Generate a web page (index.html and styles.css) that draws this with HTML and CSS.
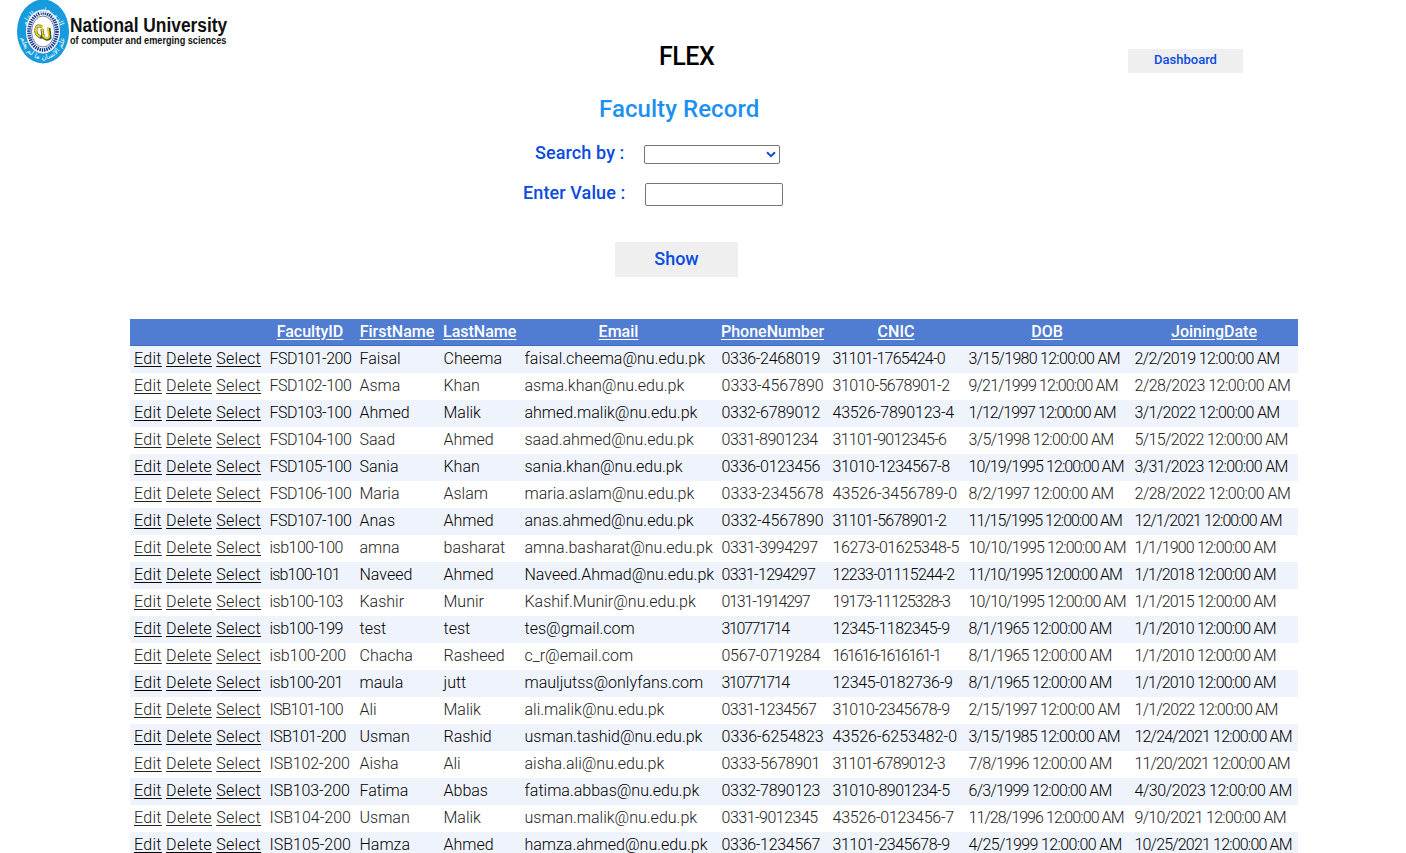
FILE: index.html
```html
<!DOCTYPE html>
<html lang="en">
<head>
<meta charset="utf-8">
<title>FLEX - Faculty Record</title>
<link rel="stylesheet" href="styles.css">
</head>
<body>
<header class="top">
  <div class="brand">
    <svg class="seal" viewBox="0 0 52 64" width="52" height="64">
      <defs>
        <path id="ringTop" d="M7.500 36 A18.500 23.500 0 1 1 44.500 36"/>
        <path id="ringBottom" d="M3.500 32 A22.500 27.500 0 0 0 48.500 32"/>
      </defs>
      <ellipse cx="26" cy="31.500" rx="26" ry="32" fill="#179bdc"/>
      <ellipse cx="26" cy="31.500" rx="17" ry="22" fill="#fff"/>
      <ellipse cx="26" cy="31.500" rx="14" ry="18.500" fill="none" stroke="#1d3f8f" stroke-width="3.600" stroke-dasharray="1.500 .8"/>
      <ellipse cx="26" cy="31.500" rx="11.500" ry="15.500" fill="#fff" stroke="#2a3f8c" stroke-width=".7"/>
      <g class="script">
        <text text-anchor="middle"><textPath href="#ringTop" startOffset="50%">الذى علم بالقلم</textPath></text>
        <text text-anchor="middle"><textPath href="#ringBottom" startOffset="50%">علم الانسان ما لم يعلم</textPath></text>
      </g>
      <g fill="none" stroke-linejoin="round">
        <path d="M25 27q-5-3-6 2t4 8q3 1 3-3" stroke="#386b32" stroke-width="3"/>
        <path d="M25 27q-5-3-6 2t4 8" stroke="#f4ca1b" stroke-width="2"/>
        <path d="M25 29l1 8q4 4 7 1l-1-10" stroke="#305f35" stroke-width="3"/>
        <path d="M25 28l1 8q4 4 6 1l-1-10" stroke="#f4ca1b" stroke-width="1.800"/>
      </g>
    </svg>
    <div class="brand-text">
      <span class="brand-name">National University</span>
      <span class="brand-sub">of computer and emerging sciences</span>
    </div>
  </div>
  <h1 class="app">FLEX</h1>
  <button class="btn dash">Dashboard</button>
</header>
<main>
  <h2 class="title"><span>Faculty Record</span></h2>
  <form class="search">
    <div class="line first"><label class="l1">Search by :</label><div class="select"><svg width="10" height="7" viewBox="0 0 10 7"><path d="M1 1.200l4 4 4-4" fill="none" stroke="#0e4fd8" stroke-width="2"/></svg></div></div>
    <div class="line second"><label class="l2">Enter Value :</label><input class="value" type="text"></div>
    <button class="btn show" type="button"><span>Show</span></button>
  </form>
  <table class="grid">
    <colgroup><col class="c1"><col class="c2"><col class="c3"><col class="c4"><col class="c5"><col class="c6"><col class="c7"><col class="c8"><col class="c9"></colgroup>
    <thead><tr><th></th><th><a>FacultyID</a></th><th><a>FirstName</a></th><th><a>LastName</a></th><th><a>Email</a></th><th><a>PhoneNumber</a></th><th><a>CNIC</a></th><th><a>DOB</a></th><th><a>JoiningDate</a></th></tr></thead>
    <tbody>
<tr><td><a>Edit</a><a>Delete</a><a>Select</a></td><td class="k5">FSD101-200</td><td>Faisal</td><td>Cheema</td><td>faisal.cheema@nu.edu.pk</td><td class="k3">0336-2468019</td><td class="k8">31101-1765424-0</td><td class="k7">3/15/1980 12:00:00 AM</td><td class="k6">2/2/2019 12:00:00 AM</td></tr>
<tr><td><a>Edit</a><a>Delete</a><a>Select</a></td><td class="k5">FSD102-100</td><td>Asma</td><td>Khan</td><td>asma.khan@nu.edu.pk</td><td>0333-4567890</td><td class="k5">31010-5678901-2</td><td class="k8">9/21/1999 12:00:00 AM</td><td class="k5">2/28/2023 12:00:00 AM</td></tr>
<tr><td><a>Edit</a><a>Delete</a><a>Select</a></td><td class="k5">FSD103-100</td><td>Ahmed</td><td>Malik</td><td>ahmed.malik@nu.edu.pk</td><td class="k3">0332-6789012</td><td class="k2">43526-7890123-4</td><td class="k9">1/12/1997 12:00:00 AM</td><td class="k6">3/1/2022 12:00:00 AM</td></tr>
<tr><td><a>Edit</a><a>Delete</a><a>Select</a></td><td class="k5">FSD104-100</td><td>Saad</td><td>Ahmed</td><td>saad.ahmed@nu.edu.pk</td><td class="k5">0331-8901234</td><td class="k7">31101-9012345-6</td><td class="k6">3/5/1998 12:00:00 AM</td><td class="k6">5/15/2022 12:00:00 AM</td></tr>
<tr><td><a>Edit</a><a>Delete</a><a>Select</a></td><td class="k5">FSD105-100</td><td>Sania</td><td>Khan</td><td>sania.khan@nu.edu.pk</td><td class="k3">0336-0123456</td><td class="k5">31010-1234567-8</td><td class="k9">10/19/1995 12:00:00 AM</td><td class="k6">3/31/2023 12:00:00 AM</td></tr>
<tr><td><a>Edit</a><a>Delete</a><a>Select</a></td><td class="k5">FSD106-100</td><td>Maria</td><td>Aslam</td><td>maria.aslam@nu.edu.pk</td><td>0333-2345678</td><td>43526-3456789-0</td><td class="k6">8/2/1997 12:00:00 AM</td><td class="k5">2/28/2022 12:00:00 AM</td></tr>
<tr><td><a>Edit</a><a>Delete</a><a>Select</a></td><td class="k5">FSD107-100</td><td>Anas</td><td>Ahmed</td><td>anas.ahmed@nu.edu.pk</td><td>0332-4567890</td><td class="k7">31101-5678901-2</td><td class="k10">11/15/1995 12:00:00 AM</td><td class="k9">12/1/2021 12:00:00 AM</td></tr>
<tr><td><a>Edit</a><a>Delete</a><a>Select</a></td><td class="k5">isb100-100</td><td>amna</td><td>basharat</td><td>amna.basharat@nu.edu.pk</td><td class="k5">0331-3994297</td><td class="k4">16273-01625348-5</td><td class="k8">10/10/1995 12:00:00 AM</td><td class="k8">1/1/1900 12:00:00 AM</td></tr>
<tr><td><a>Edit</a><a>Delete</a><a>Select</a></td><td class="k8">isb100-101</td><td>Naveed</td><td>Ahmed</td><td>Naveed.Ahmad@nu.edu.pk</td><td class="k7">0331-1294297</td><td class="k7">12233-01115244-2</td><td class="k10">11/10/1995 12:00:00 AM</td><td class="k8">1/1/2018 12:00:00 AM</td></tr>
<tr><td><a>Edit</a><a>Delete</a><a>Select</a></td><td class="k5">isb100-103</td><td>Kashir</td><td>Munir</td><td>Kashif.Munir@nu.edu.pk</td><td class="k12">0131-1914297</td><td class="k10">19173-11125328-3</td><td class="k8">10/10/1995 12:00:00 AM</td><td class="k8">1/1/2015 12:00:00 AM</td></tr>
<tr><td><a>Edit</a><a>Delete</a><a>Select</a></td><td class="k5">isb100-199</td><td>test</td><td>test</td><td>tes@gmail.com</td><td class="k14">310771714</td><td class="k5">12345-1182345-9</td><td class="k7">8/1/1965 12:00:00 AM</td><td class="k8">1/1/2010 12:00:00 AM</td></tr>
<tr><td><a>Edit</a><a>Delete</a><a>Select</a></td><td class="k2">isb100-200</td><td>Chacha</td><td>Rasheed</td><td>c_r@email.com</td><td class="k3">0567-0719284</td><td class="k16">161616-1616161-1</td><td class="k7">8/1/1965 12:00:00 AM</td><td class="k8">1/1/2010 12:00:00 AM</td></tr>
<tr><td><a>Edit</a><a>Delete</a><a>Select</a></td><td class="k5">isb100-201</td><td>maula</td><td>jutt</td><td>mauljutss@onlyfans.com</td><td class="k14">310771714</td><td class="k3">12345-0182736-9</td><td class="k7">8/1/1965 12:00:00 AM</td><td class="k8">1/1/2010 12:00:00 AM</td></tr>
<tr><td><a>Edit</a><a>Delete</a><a>Select</a></td><td class="k8">ISB101-100</td><td>Ali</td><td>Malik</td><td>ali.malik@nu.edu.pk</td><td class="k6">0331-1234567</td><td class="k5">31010-2345678-9</td><td class="k7">2/15/1997 12:00:00 AM</td><td class="k7">1/1/2022 12:00:00 AM</td></tr>
<tr><td><a>Edit</a><a>Delete</a><a>Select</a></td><td class="k5">ISB101-200</td><td>Usman</td><td>Rashid</td><td>usman.tashid@nu.edu.pk</td><td>0336-6254823</td><td>43526-6253482-0</td><td class="k7">3/15/1985 12:00:00 AM</td><td class="k8">12/24/2021 12:00:00 AM</td></tr>
<tr><td><a>Edit</a><a>Delete</a><a>Select</a></td><td class="k1">ISB102-200</td><td>Aisha</td><td>Ali</td><td>aisha.ali@nu.edu.pk</td><td class="k3">0333-5678901</td><td class="k8">31101-6789012-3</td><td class="k7">7/8/1996 12:00:00 AM</td><td class="k9">11/20/2021 12:00:00 AM</td></tr>
<tr><td><a>Edit</a><a>Delete</a><a>Select</a></td><td class="k1">ISB103-200</td><td>Fatima</td><td>Abbas</td><td>fatima.abbas@nu.edu.pk</td><td class="k3">0332-7890123</td><td class="k5">31010-8901234-5</td><td class="k7">6/3/1999 12:00:00 AM</td><td class="k4">4/30/2023 12:00:00 AM</td></tr>
<tr><td><a>Edit</a><a>Delete</a><a>Select</a></td><td>ISB104-200</td><td>Usman</td><td>Malik</td><td>usman.malik@nu.edu.pk</td><td class="k5">0331-9012345</td><td class="k2">43526-0123456-7</td><td class="k9">11/28/1996 12:00:00 AM</td><td class="k7">9/10/2021 12:00:00 AM</td></tr>
<tr><td><a>Edit</a><a>Delete</a><a>Select</a></td><td>ISB105-200</td><td>Hamza</td><td>Ahmed</td><td>hamza.ahmed@nu.edu.pk</td><td class="k3">0336-1234567</td><td class="k5">31101-2345678-9</td><td class="k6">4/25/1999 12:00:00 AM</td><td class="k8">10/25/2021 12:00:00 AM</td></tr>
    </tbody>
  </table>
</main>
</body>
</html>
```

FILE: styles.css
```css
* { box-sizing: border-box; }
html, body { height: 100%; }
body { margin: 0; background: #fff; overflow: hidden; font-family: Bahnschrift, Roboto, sans-serif; color: #000; }
h1, h2 { margin: 0; }

.top { display: flex; height: 92px; }
.brand { display: flex; width: 659px; padding-left: 17px; }
.seal { display: block; flex: none; overflow: visible; }
.script { font: 400 7px "DejaVu Sans", sans-serif; fill: #f2fbff; }
.brand-text { display: flex; flex-direction: column; padding: 15px 0 0 1px; font-family: "Liberation Sans", Arial, sans-serif; font-weight: 700; color: #111; white-space: nowrap; }
.brand-name { font-size: 20px; line-height: 20px; transform: scaleX(.868); transform-origin: left; }
.brand-sub { font-size: 10.500px; line-height: 11px; transform: scaleX(.87); transform-origin: left; }
.app { width: 469px; padding-top: 43px; font-size: 25px; line-height: 28px; font-weight: 500; letter-spacing: -.5px; }
.btn { border: 0; padding: 0; background: #efefef; font-family: inherit; font-weight: 500; color: #0a4be0; }
.dash { width: 115px; height: 24px; margin-top: 49px; font-size: 13px; padding-bottom: 3px; }

.title { padding-left: 599px; height: 52px; padding-top: 3px; font-size: 24px; line-height: 28px; font-weight: 500; letter-spacing: .07px; color: #1e90f0; }
.line { display: flex; color: #0a4be0; font-size: 18px; font-weight: 500; line-height: 20px; white-space: nowrap; letter-spacing: .1px; }
.first { padding-left: 535px; height: 39px; }
.second { padding-left: 523px; height: 59px; }
.l1 { width: 109px; margin-top: -1px; }
.l2 { width: 122px; }
.select { display: flex; align-items: center; justify-content: flex-end; width: 136px; height: 19px; margin-top: 1px; padding-right: 3px; border: 1px solid #767676; border-radius: 2px; }
.value { width: 138px; height: 23px; margin: 0; border: 1px solid #767676; border-radius: 2px; }
.show { display: block; width: 123px; height: 35px; margin-left: 615px; padding-bottom: 2px; font-size: 18px; }

.grid { width: 1168px; margin: 42px 0 0 130px; table-layout: fixed; border-collapse: collapse; font-size: 16px; line-height: 19px; font-weight: 300; }
.c1 { width: 135px; } .c2 { width: 90px; } .c3 { width: 84px; } .c4 { width: 81px; } .c5 { width: 197px; }
.c6 { width: 111px; } .c7 { width: 136px; } .c8 { width: 166px; } .c9 { width: 168px; }
.grid th, .grid td { height: 27px; padding: 3px 3.500px 5px 4.500px; white-space: nowrap; }
.grid td:first-child { padding-left: 4px; }
.grid th { padding-left: 4px; padding-right: 4px; font-weight: 500; color: #fff; text-align: center; }
.grid thead tr { background: #507cd1; box-shadow: inset 0 -1px #3c6fc4; }
.grid tbody tr { color: #222; }
.grid tbody tr:nth-child(odd) { background: #eff3fb; color: #000; }
.grid a { text-decoration: underline; text-underline-offset: 2px; }
.grid td a { display: inline-block; margin-right: 4.300px; letter-spacing: .3px; }

/* Tracking steps that tighten numeric cells */
.k1 { letter-spacing: -.1px; }
.k2 { letter-spacing: -.2px; }
.k3 { letter-spacing: -.3px; }
.k4 { letter-spacing: -.43px; }
.k5 { letter-spacing: -.5px; }
.k6 { letter-spacing: -.63px; }
.k7 { letter-spacing: -.72px; }
.k8 { letter-spacing: -.82px; }
.k9 { letter-spacing: -.92px; }
.k10 { letter-spacing: -1px; }
.k12 { letter-spacing: -1.200px; }
.k14 { letter-spacing: -1.400px; }
.k16 { letter-spacing: -1.600px; }
```
